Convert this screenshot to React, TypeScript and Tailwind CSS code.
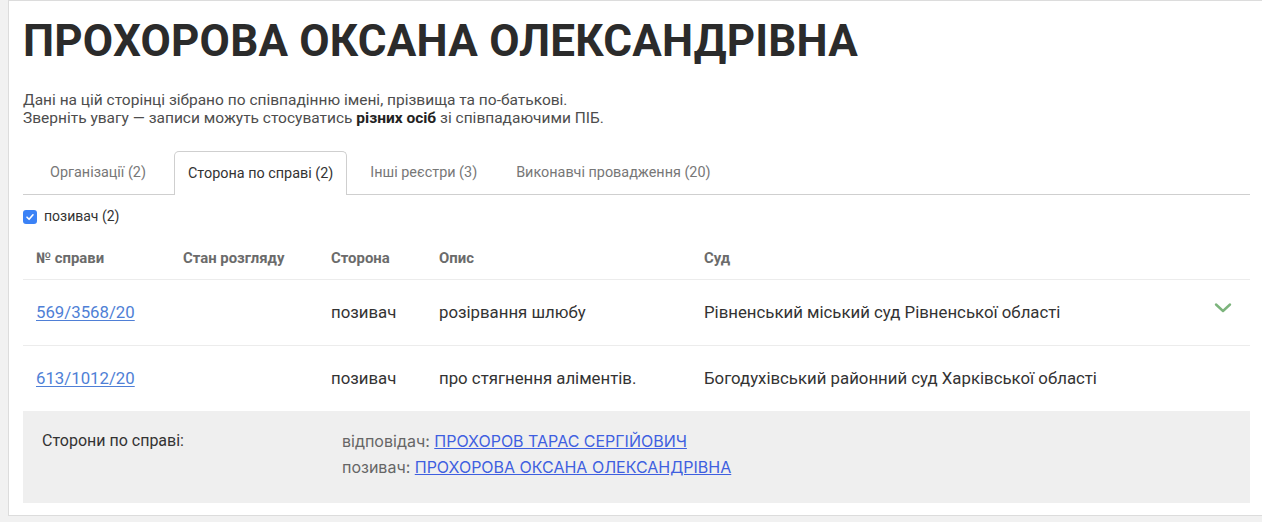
import React from 'react';

const tabs = [
  { label: 'Організації (2)', active: false, gap: '' },
  { label: 'Сторона по справі (2)', active: true, gap: 'ml-[15px]' },
  { label: 'Інші реєстри (3)', active: false, gap: 'ml-[10px]' },
  { label: 'Виконавчі провадження (20)', active: false, gap: 'ml-[13px]' },
];

const rows = [
  {
    num: '569/3568/20',
    side: 'позивач',
    desc: 'розірвання шлюбу',
    court: 'Рівненський міський суд Рівненської області',
    chevron: true,
  },
  {
    num: '613/1012/20',
    side: 'позивач',
    desc: 'про стягнення аліментів.',
    court: 'Богодухівський районний суд Харківської області',
    chevron: false,
  },
];

const App = () => {
  return (
    <div className="min-h-[522px] bg-[#f1f1f1] pl-[8px] font-['Roboto',sans-serif]">
      <div className="bg-white border-t border-b border-l border-[#dcdcdc] pl-[14px] pr-[12px] pt-[16px] pb-[12px]">
        <h1 className="text-[44px] leading-[48px] font-bold text-[#2b2b2b] tracking-[0.2px]">
          ПРОХОРОВА ОКСАНА ОЛЕКСАНДРІВНА
        </h1>

        <div className="mt-[26px] text-[15.5px] leading-[18px] text-[#4d4d4d]">
          <p>Дані на цій сторінці зібрано по співпадінню імені, прізвища та по-батькові.</p>
          <p>
            Зверніть увагу — записи можуть стосуватись <b className="font-bold text-[#222]">різних осіб</b> зі
            співпадаючими ПІБ.
          </p>
        </div>

        {/* tabs */}
        <div className="mt-[24px] flex border-b border-[#cfcfcf] pl-[14px]">
          {tabs.map((t) => (
            <div
              key={t.label}
              className={
                t.active
                  ? `${t.gap} h-[44px] -mb-px px-[13px] flex items-center text-[14.4px] text-[#333] bg-white border border-b-0 border-[#cfcfcf] rounded-t-[5px]`
                  : `${t.gap} h-[43px] px-[12px] flex items-center text-[14.4px] text-[#777] border border-transparent`
              }
            >
              {t.label}
            </div>
          ))}
        </div>

        <label className="mt-[11px] flex items-center gap-[7px] text-[14px] text-[#333]">
          <span className="w-[14px] h-[14px] rounded-[3px] bg-[#3b82f6] flex items-center justify-center">
            <svg width="10" height="10" viewBox="0 0 10 10" fill="none">
              <path d="M2 5.2 L4.1 7.3 L8 2.8" stroke="white" strokeWidth="1.6" strokeLinecap="round" strokeLinejoin="round" />
            </svg>
          </span>
          позивач (2)
        </label>

        {/* table */}
        <div className="mt-[10px]">
          <div className="grid grid-cols-[147px_148px_108px_265px_1fr] h-[43px] items-center border-b border-[#ececec] text-[14.9px] font-bold text-[#6b6b6b]">
            <div className="pl-[13px]">№ справи</div>
            <div className="pl-[13px]">Стан розгляду</div>
            <div className="pl-[13px]">Сторона</div>
            <div className="pl-[13px]">Опис</div>
            <div className="pl-[13px]">Суд</div>
          </div>

          {rows.map((r) => (
            <div
              key={r.num}
              className="grid grid-cols-[147px_148px_108px_265px_1fr] h-[66px] items-center border-b border-[#ececec] text-[16.8px] text-[#333]"
            >
              <div className="pl-[13px]">
                <a className="text-[#4f7fd6] underline underline-offset-2">{r.num}</a>
              </div>
              <div className="pl-[13px]" />
              <div className="pl-[13px]">{r.side}</div>
              <div className="pl-[13px]">{r.desc}</div>
              <div className="pl-[13px] flex items-center justify-between pr-[18px]">
                <span>{r.court}</span>
                {r.chevron && (
                  <svg width="18" height="12" viewBox="0 0 18 12" fill="none" className="-mt-[10px]">
                    <path d="M2 2.5 L9 9 L16 2.5" stroke="#7cb47c" strokeWidth="2.4" strokeLinecap="round" strokeLinejoin="round" />
                  </svg>
                )}
              </div>
            </div>
          ))}

          <div className="bg-[#efefef] h-[92px] flex pt-[17px] -mt-px">
            <div className="w-[319px] pl-[19px] text-[16px] text-[#333] leading-[26px]">Сторони по справі:</div>
            <div className="text-[16px] leading-[26px] text-[#666] font-['Inter',sans-serif]">
              <div>
                відповідач: <a className="text-[#3f5fe0] underline">ПРОХОРОВ ТАРАС СЕРГІЙОВИЧ</a>
              </div>
              <div>
                позивач: <a className="text-[#3f5fe0] underline">ПРОХОРОВА ОКСАНА ОЛЕКСАНДРІВНА</a>
              </div>
            </div>
          </div>
        </div>
      </div>
    </div>
  );
};

export default App;
